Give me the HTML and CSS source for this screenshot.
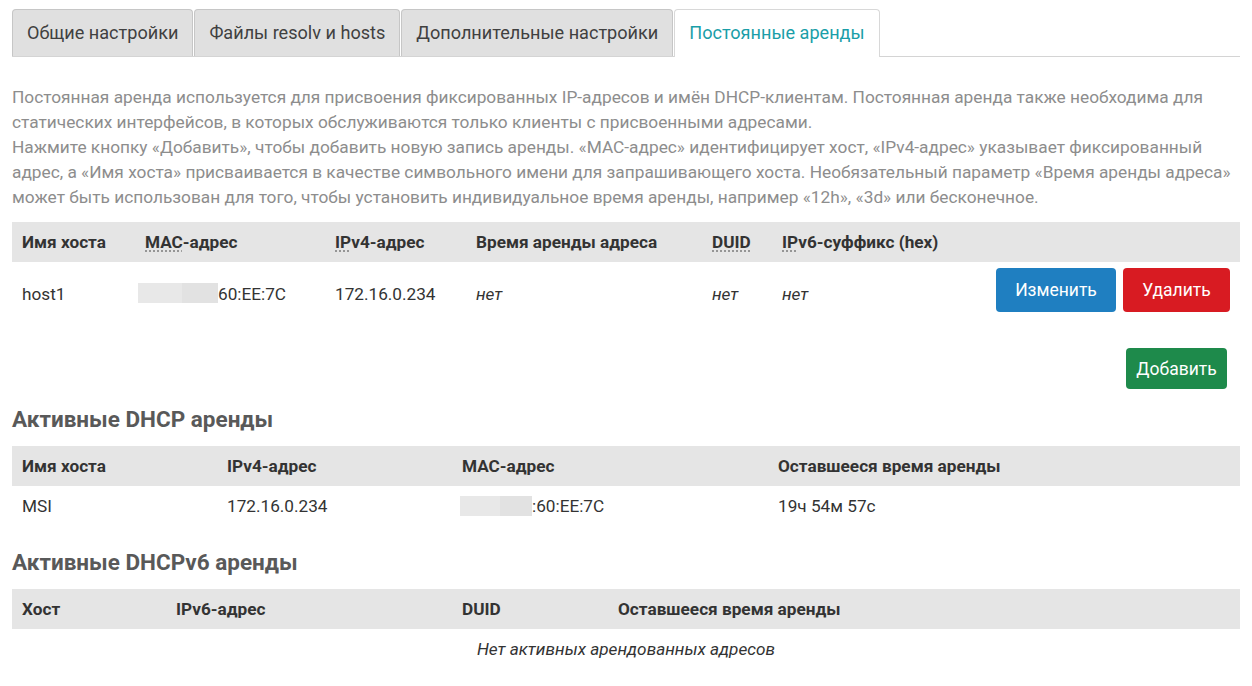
FILE: index.html
```html
<!DOCTYPE html>
<html lang="ru">
<head>
    <meta charset="UTF-8">
    <meta name="viewport" content="width=device-width, initial-scale=1.0">
    <title>DHCP и DNS - Постоянные аренды</title>
    <link rel="stylesheet" href="styles.css">
</head>
<body>
    <div class="page">
        <ul class="tabs">
            <li class="tab">Общие настройки</li>
            <li class="tab">Файлы resolv и hosts</li>
            <li class="tab">Дополнительные настройки</li>
            <li class="tab active">Постоянные аренды</li>
        </ul>

        <div class="description">
            Постоянная аренда используется для присвоения фиксированных IP-адресов и имён DHCP-клиентам. Постоянная аренда также необходима для статических интерфейсов, в которых обслуживаются только клиенты с присвоенными адресами.<br>
            Нажмите кнопку «Добавить», чтобы добавить новую запись аренды. «MAC-адрес» идентифицирует хост, «IPv4-адрес» указывает фиксированный адрес, а «Имя хоста» присваивается в качестве символьного имени для запрашивающего хоста. Необязательный параметр «Время аренды адреса» может быть использован для того, чтобы установить индивидуальное время аренды, например «12h», «3d» или бесконечное.
        </div>

        <table class="table leases-static">
            <colgroup>
                <col style="width: 123px">
                <col style="width: 190px">
                <col style="width: 141px">
                <col style="width: 236px">
                <col style="width: 70px">
                <col style="width: 200px">
                <col>
            </colgroup>
            <thead>
                <tr>
                    <th>Имя хоста</th>
                    <th><abbr>MAC</abbr>-адрес</th>
                    <th><abbr>IP</abbr>v4-адрес</th>
                    <th>Время аренды адреса</th>
                    <th><abbr>DUID</abbr></th>
                    <th><abbr>IP</abbr>v6-суффикс (hex)</th>
                    <th></th>
                </tr>
            </thead>
            <tbody>
                <tr>
                    <td>host1</td>
                    <td><span class="masked mac-1"></span>60:EE:7C</td>
                    <td>172.16.0.234</td>
                    <td><em>нет</em></td>
                    <td><em>нет</em></td>
                    <td><em>нет</em></td>
                    <td class="actions">
                        <button class="btn btn-edit">Изменить</button><button class="btn btn-remove">Удалить</button>
                    </td>
                </tr>
            </tbody>
        </table>

        <div class="add-row">
            <button class="btn btn-add">Добавить</button>
        </div>

        <h3>Активные DHCP аренды</h3>
        <table class="table">
            <colgroup>
                <col style="width: 205px">
                <col style="width: 235px">
                <col style="width: 316px">
                <col>
            </colgroup>
            <thead>
                <tr>
                    <th>Имя хоста</th>
                    <th>IPv4-адрес</th>
                    <th>MAC-адрес</th>
                    <th>Оставшееся время аренды</th>
                </tr>
            </thead>
            <tbody>
                <tr>
                    <td>MSI</td>
                    <td>172.16.0.234</td>
                    <td><span class="masked mac-2"></span>:60:EE:7C</td>
                    <td>19ч 54м 57с</td>
                </tr>
            </tbody>
        </table>

        <h3>Активные DHCPv6 аренды</h3>
        <table class="table">
            <colgroup>
                <col style="width: 154px">
                <col style="width: 286px">
                <col style="width: 156px">
                <col>
            </colgroup>
            <thead>
                <tr>
                    <th>Хост</th>
                    <th>IPv6-адрес</th>
                    <th>DUID</th>
                    <th>Оставшееся время аренды</th>
                </tr>
            </thead>
            <tbody>
                <tr>
                    <td class="empty" colspan="4"><em>Нет активных арендованных адресов</em></td>
                </tr>
            </tbody>
        </table>
    </div>
</body>
</html>
```

FILE: styles.css
```css
* {
    margin: 0;
    padding: 0;
    box-sizing: border-box;
}

body {
    font-family: Roboto, "Liberation Sans", sans-serif;
    background: #fff;
    color: #404040;
}

.page {
    padding: 9px 12px 0 12px;
}

/* Tabs */
.tabs {
    list-style: none;
    display: flex;
    gap: 1px;
    border-bottom: 1px solid #d4d4d4;
}

.tab {
    height: 47px;
    line-height: 46px;
    padding: 0 14px;
    font-size: 18.1px;
    color: #404040;
    background: #e0e0e0;
    border: 1px solid #c6c6c6;
    border-bottom: none;
    border-radius: 4px 4px 0 0;
    margin-bottom: -1px;
}

.tab.active {
    background: #fff;
    color: #1a9ea8;
    border-color: #d8d8d8;
    height: 48px;
}

/* Description */
.description {
    margin-top: 28px;
    font-size: 17.3px;
    line-height: 25px;
    color: #8d8d8d;
}

/* Tables */
.table {
    width: 100%;
    border-collapse: collapse;
    table-layout: fixed;
    font-size: 17.2px;
    color: #333;
}

.leases-static {
    margin-top: 12px;
}

.table th {
    background: #e5e5e5;
    height: 40px;
    padding: 0 10px;
    text-align: left;
    font-weight: bold;
    white-space: nowrap;
}

.table td {
    height: 40px;
    padding: 0 10px;
    white-space: nowrap;
}

.table em {
    font-style: italic;
}

.table abbr {
    text-decoration: underline dotted #888;
    text-underline-offset: 3px;
}

.leases-static td {
    height: 56px;
    padding-top: 8px;
}

.table td.actions {
    text-align: right;
    vertical-align: top;
    padding: 6px 10px 0 0;
}

.table td.empty {
    text-align: center;
}

.masked {
    display: inline-block;
    height: 20px;
    vertical-align: middle;
    background: linear-gradient(90deg, #e8e8e8 0 55%, #e2e2e2 55% 100%);
}

.mac-1 {
    width: 80px;
    margin-left: -7px;
    margin-top: -4px;
}

.mac-2 {
    width: 72px;
    margin-left: -2px;
    margin-top: -2px;
}

/* Buttons */
.btn {
    font-family: Roboto, "Liberation Sans", sans-serif;
    font-size: 17.5px;
    color: #fff;
    border: none;
    border-radius: 4px;
    height: 44px;
    padding: 0;
    cursor: pointer;
}

.btn-edit {
    background: #1f7fc1;
    width: 120px;
}

.btn-remove {
    background: #d81b22;
    width: 107px;
    margin-left: 7px;
}

.add-row {
    display: flex;
    justify-content: flex-end;
    padding-right: 13px;
    margin-top: 30px;
}

.btn-add {
    background: #1e8a4b;
    height: 41px;
    width: 101px;
}

/* Section headings */
h3 {
    font-size: 22.5px;
    line-height: 28px;
    font-weight: bold;
    color: #595959;
    margin-top: 16px;
    margin-bottom: 13px;
}

.table + h3 {
    margin-top: 22px;
}
```
